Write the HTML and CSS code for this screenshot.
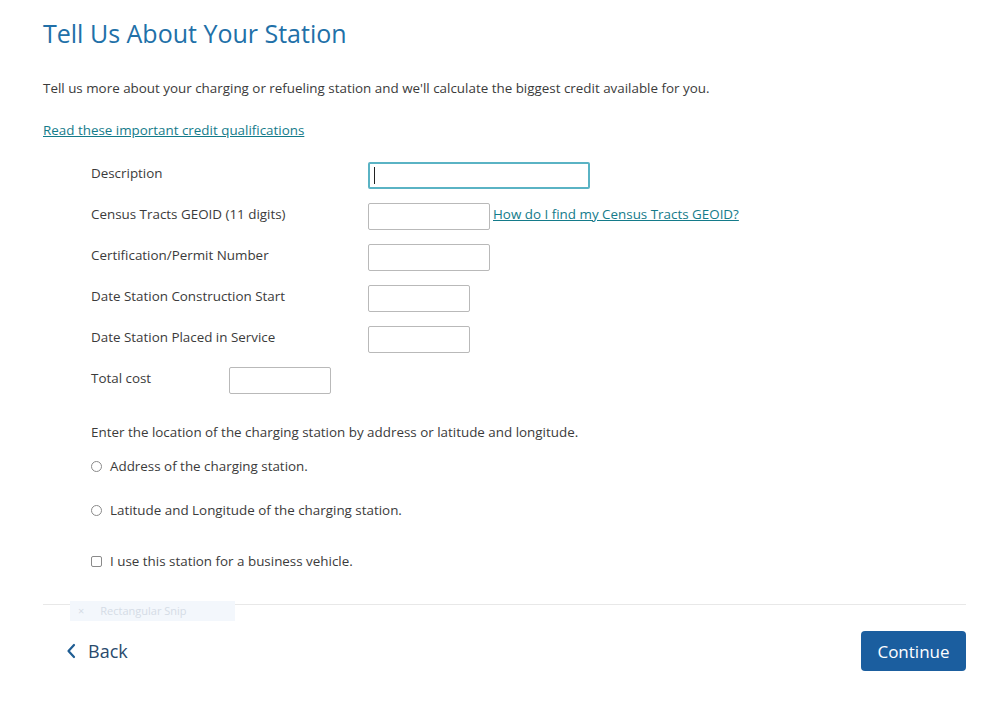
FILE: index.html
```
<!DOCTYPE html>
<html lang="en">
<head>
    <meta charset="UTF-8">
    <meta name="viewport" content="width=device-width, initial-scale=1.0">
    <title>Tell Us About Your Station</title>
    <link rel="stylesheet" href="styles.css">
</head>
<body>
    <div class="page">
        <h1>Tell Us About Your Station</h1>
        <p class="intro">Tell us more about your charging or refueling station and we'll calculate the biggest credit available for you.</p>
        <a class="link" href="#">Read these important credit qualifications</a>

        <div class="form">
            <div class="row">
                <label class="label" for="desc">Description</label>
                <div class="field-wrap">
                    <input type="text" id="desc" class="field field-wide is-focused">
                    <span class="caret"></span>
                </div>
            </div>
            <div class="row">
                <label class="label" for="geoid">Census Tracts GEOID (11 digits)</label>
                <input type="text" id="geoid" class="field field-mid">
                <a class="link link-inline" href="#">How do I find my Census Tracts GEOID?</a>
            </div>
            <div class="row">
                <label class="label" for="permit">Certification/Permit Number</label>
                <input type="text" id="permit" class="field field-mid">
            </div>
            <div class="row">
                <label class="label" for="start">Date Station Construction Start</label>
                <input type="text" id="start" class="field field-short">
            </div>
            <div class="row">
                <label class="label" for="service">Date Station Placed in Service</label>
                <input type="text" id="service" class="field field-short">
            </div>
            <div class="row">
                <label class="label label-short" for="cost">Total cost</label>
                <input type="text" id="cost" class="field field-short">
            </div>

            <p class="location-text">Enter the location of the charging station by address or latitude and longitude.</p>
            <label class="choice choice-first">
                <input type="radio" name="loc" class="radio">
                Address of the charging station.
            </label>
            <label class="choice">
                <input type="radio" name="loc" class="radio">
                Latitude and Longitude of the charging station.
            </label>
            <label class="choice choice-check">
                <input type="checkbox" class="check">
                I use this station for a business vehicle.
            </label>
        </div>

        <div class="footer">
            <div class="snip"><span class="snip-x">&times;</span>Rectangular Snip</div>
            <a class="back" href="#">
                <svg width="10" height="16" viewBox="0 0 10 16" aria-hidden="true">
                    <path d="M8 2 L2.5 8 L8 14" fill="none" stroke="#1f5d93" stroke-width="2.2" stroke-linecap="round" stroke-linejoin="round"/>
                </svg>
                Back
            </a>
            <button class="btn-continue" type="button">Continue</button>
        </div>
    </div>
</body>
</html>
```
FILE: styles.css
```
* {
    box-sizing: border-box;
    margin: 0;
    padding: 0;
}

body {
    font-family: "Open Sans", Arial, sans-serif;
    color: #3b3b3b;
    background: #fff;
}
.page {
    padding: 16px 32px 0 43px;
}
h1 {
    font-size: 25px;
    font-weight: 400;
    color: #2170a8;
    line-height: 34px;
}
.intro {
    font-size: 13.4px;
    line-height: 18px;
    margin-top: 29px;
}
.link {
    display: inline-block;
    margin-top: 24px;
    font-size: 13.4px;
    line-height: 18px;
    color: #147b8a;
    text-decoration: underline;
}
.form {
    padding-left: 48px;
    margin-top: 15px;
}
.row {
    display: flex;
    align-items: center;
    height: 41px;
}
.label {
    width: 277px;
    font-size: 13.4px;
    padding-bottom: 6px;
}
.label-short {
    width: 138px;
}
.field {
    height: 27px;
    border: 1px solid #b9b9b9;
    border-radius: 2px;
    font-size: 13px;
    padding: 0 4px;
    outline: none;
}
.field-wide { width: 222px; }
.field-mid { width: 122px; }
.field-short { width: 102px; }
.field-wrap {
    position: relative;
}
.is-focused {
    border: 2px solid #5ab3c4;
}
.caret {
    position: absolute;
    left: 6px;
    top: 5px;
    width: 1px;
    height: 17px;
    background: #222;
}
.link-inline {
    margin: 0 0 0 3px;
    padding-bottom: 6px;
}
.location-text {
    font-size: 13.4px;
    margin-top: 22px;
}
.choice {
    display: flex;
    align-items: center;
    gap: 8px;
    font-size: 13.4px;
    margin-top: 26px;
}
.choice-first {
    margin-top: 16px;
}
.choice-check {
    margin-top: 33px;
}
.radio,
.check {
    appearance: none;
    width: 11px;
    height: 11px;
    border: 1px solid #8a8a8a;
    background: #fff;
}
.radio {
    border-radius: 50%;
}
.check {
    border-radius: 2px;
}
.footer {
    position: relative;
    display: flex;
    align-items: center;
    justify-content: space-between;
    margin-top: 34px;
    border-top: 1px solid #e8e8e8;
    padding: 26px 0 0 23px;
}
.snip {
    position: absolute;
    left: 27px;
    top: -4px;
    width: 165px;
    height: 20px;
    background: #f3f7fc;
    color: #d5dce6;
    font-size: 11px;
    line-height: 20px;
    padding-left: 8px;
}
.snip-x {
    margin-right: 16px;
}
.back {
    display: flex;
    align-items: center;
    gap: 12px;
    font-size: 18px;
    color: #2a4a6c;
    text-decoration: none;
}
.btn-continue {
    width: 105px;
    height: 40px;
    background: #1b5e9f;
    color: #fff;
    border: none;
    border-radius: 4px;
    font-family: inherit;
    font-size: 17px;
}
```
